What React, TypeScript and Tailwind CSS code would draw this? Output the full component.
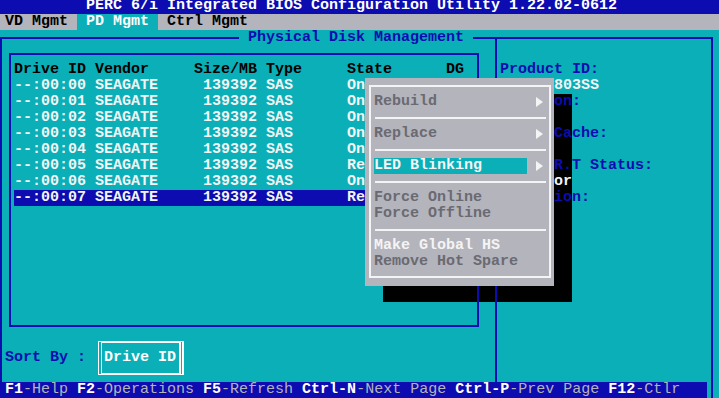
import React from "react";

const drives = [
  { id: "--:00:00", state: "Online", dg: "0" },
  { id: "--:00:01", state: "Online", dg: "0" },
  { id: "--:00:02", state: "Online", dg: "0" },
  { id: "--:00:03", state: "Online", dg: "1" },
  { id: "--:00:04", state: "Online", dg: "1" },
  { id: "--:00:05", state: "Ready", dg: "--" },
  { id: "--:00:06", state: "Online", dg: "1" },
  { id: "--:00:07", state: "Ready", dg: "--" },
];

const info: { text: string; value?: boolean }[] = [
  { text: "Product ID:" },
  { text: "ST3146803SS", value: true },
  { text: "Revision:" },
  { text: "HPS3", value: true },
  { text: "Write Cache:" },
  { text: "N/A", value: true },
  { text: "S.M.A.R.T Status:" },
  { text: "No Error", value: true },
  { text: "Operation:" },
  { text: "None", value: true },
];

type MenuRow =
  | { sep: true }
  | { sep?: false; label: string; enabled?: boolean; arrow?: boolean; active?: boolean };

const menu: MenuRow[] = [
  { label: "Rebuild", arrow: true },
  { sep: true },
  { label: "Replace", arrow: true },
  { sep: true },
  { label: "LED Blinking", arrow: true, active: true, enabled: true },
  { sep: true },
  { label: "Force Online" },
  { label: "Force Offline" },
  { sep: true },
  { label: "Make Global HS", enabled: true },
  { label: "Remove Hot Spare" },
];

const status: [string, string][] = [
  ["F1", "-Help "],
  ["F2", "-Operations "],
  ["F5", "-Refresh "],
  ["Ctrl-N", "-Next Page "],
  ["Ctrl-P", "-Prev Page "],
  ["F12", "-Ctlr"],
];

function Arrow() {
  return (
    <svg width="7" height="10" viewBox="0 0 7 10" className="block">
      <path d="M0 0 L7 5 L0 10 Z" fill="#f4f4f4" />
    </svg>
  );
}

export default function App() {
  return (
    <div className="relative isolate w-[719px] h-[398px] overflow-hidden bg-[#0aafb7] font-['Liberation_Mono','DejaVu_Sans_Mono',monospace] font-bold text-[15px] leading-[16px]">
      {/* popup shadow (drawn beneath the text, like a text-mode shadow) */}
      <div className="absolute z-0 left-[383px] top-[94px] w-[189px] h-[208px] bg-black" />

      <div className="relative z-10 -mt-[2px] -ml-[4px] w-[724px] flex flex-col">
        {/* title */}
        <div className="h-[16px] bg-[#0c0cb0] text-white pl-[90px] whitespace-pre">
          PERC 6/i Integrated BIOS Configuration Utility 1.22.02-0612
        </div>
        {/* tabs */}
        <div className="h-[16px] bg-[#b4b4bc] flex whitespace-pre">
          <span className="text-black"> VD Mgmt </span>
          <span className="bg-[#0aafb7] text-white"> PD Mgmt </span>
          <span className="text-black"> Ctrl Mgmt </span>
        </div>

        {/* main area */}
        <div className="h-[352px]">
          <div className="relative mt-[7px] ml-[4px] w-[713px] h-[345px] border-x-2 border-t-2 border-[#0c0cb0] flex">
            <div className="absolute -top-[9px] left-[237px] bg-[#0aafb7] px-[9px] text-[#0c0cb0] whitespace-pre">
              Physical Disk Management
            </div>

            {/* left column */}
            <div className="w-[493px] flex flex-col">
              <div className="ml-[7px] mt-[14px] w-[470px] h-[274px] border-2 border-[#0c0cb0] pt-[7px] pl-[3px]">
                <div className="flex h-[16px] text-black whitespace-pre">
                  <span className="w-[81px]">Drive ID</span>
                  <span className="w-[99px]">Vendor</span>
                  <span className="w-[63px] mr-[9px] text-right">Size/MB</span>
                  <span className="w-[81px]">Type</span>
                  <span className="w-[99px]">State</span>
                  <span>DG</span>
                </div>
                {drives.map((d, i) => (
                  <div
                    key={d.id}
                    className={
                      "flex h-[16px] w-[459px] text-[#f4f4f4] whitespace-pre " +
                      (i === 7 ? "bg-[#0c0cb0]" : "")
                    }
                  >
                    <span className="w-[81px]">{d.id}</span>
                    <span className="w-[99px]">SEAGATE</span>
                    <span className="w-[63px] mr-[9px] text-right">139392</span>
                    <span className="w-[81px]">SAS</span>
                    <span className="w-[99px]">{d.state}</span>
                    <span>{d.dg}</span>
                  </div>
                ))}
              </div>

              <div className="mt-[14px] h-[34px] flex items-center pl-[3px]">
                <span className="text-[#0c0cb0] whitespace-pre">Sort By :</span>
                <div className="ml-[12px] h-[34px] w-[86px] flex items-center border-white border-y-2 border-l-[4px] border-r-[5px] border-double [border-top-style:solid] [border-bottom-style:solid] pl-[2px] text-white">
                  Drive ID
                </div>
              </div>
            </div>

            {/* right panel */}
            <div className="flex-1 border-l-2 border-[#0c0cb0] pl-[3px] pt-[23px] whitespace-pre">
              {info.map((r) => (
                <div
                  key={r.text}
                  className={"h-[16px] " + (r.value ? "text-[#f4f4f4]" : "text-[#0c0cb0]")}
                >
                  {r.text}
                </div>
              ))}
            </div>
          </div>
        </div>

        {/* status bar */}
        <div className="h-[16px] flex">
          <div className="w-[711px] bg-[#0c0cb0] pl-[9px] whitespace-pre">
            {status.map(([k, v]) => (
              <React.Fragment key={k}>
                <span className="text-white">{k}</span>
                <span className="text-[#b4b4bc] font-normal">{v}</span>
              </React.Fragment>
            ))}
          </div>
          <div className="ml-[4px] w-[2px] bg-[#0c0cb0]" />
        </div>
      </div>

      {/* popup menu */}
      <div className="absolute z-20 left-[365px] top-[78px] w-[189px] h-[208px] bg-[#b4b4bc] pt-[7px] pl-[4px]">
        <div className="w-[182px] h-[193px] border-2 border-[#f4f4f4] pt-[7px] whitespace-pre">
          {menu.map((m, i) =>
            m.sep ? (
              <div key={i} className="h-[16px] flex items-center pl-[4px]">
                <div className="w-[171px] h-[2px] bg-[#f4f4f4]" />
              </div>
            ) : (
              <div key={i} className="h-[16px] flex items-center pl-[3px]">
                <div className="w-[162px]">
                  <span
                    className={
                      "inline-block " +
                      (m.active
                        ? "w-[153px] bg-[#0aafb7] text-[#f4f4f4]"
                        : m.enabled
                        ? "text-[#f4f4f4]"
                        : "text-[#6a6a72]")
                    }
                  >
                    {m.label}
                  </span>
                </div>
                {m.arrow ? <Arrow /> : null}
              </div>
            )
          )}
        </div>
      </div>
    </div>
  );
}
